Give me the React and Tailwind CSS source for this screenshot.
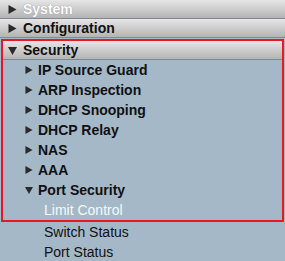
const font = { fontFamily: '"Liberation Sans", Arial, sans-serif' };

function Arrow({ open, small }) {
  const s = small ? 8 : 9;
  return (
    <svg width={s} height={s} viewBox="0 0 9 9" className="shrink-0">
      {open ? (
        <polygon points="0,1 9,1 4.5,9" fill="#2a2a2a" />
      ) : (
        <polygon points="0.5,0 8.5,4.5 0.5,9" fill="#2a2a2a" />
      )}
    </svg>
  );
}

function Header({ label, open, light, pad = 'pl-[8px]' }) {
  return (
    <div className={"h-[19px] border-b border-[#7e8b97] bg-gradient-to-b from-[#e6e6e6] to-[#b4b4b4] flex items-center " + pad}>
      <Arrow open={open} />
      <span
        className={"ml-[6px] text-[14px] leading-[18px] font-bold " + (light ? 'text-white' : 'text-[#111]')}
        style={light ? { textShadow: '0 0 1px #777' } : undefined}
      >
        {label}
      </span>
    </div>
  );
}

function Item({ label, open }) {
  return (
    <div className="h-[20px] flex items-center pl-[22px]">
      <Arrow open={open} small />
      <span className="ml-[5px] text-[14px] leading-[20px] font-bold text-[#111]">{label}</span>
    </div>
  );
}

function Leaf({ label, active, inside }) {
  return (
    <div
      className={
        "h-[20px] text-[14px] leading-[20px] " +
        (inside ? 'pl-[41px] ' : 'pl-[44px] ') +
        (active ? 'text-[#f6f8fa]' : 'text-[#111]')
      }
    >
      {label}
    </div>
  );
}

export default function App() {
  const items = ['IP Source Guard', 'ARP Inspection', 'DHCP Snooping', 'DHCP Relay', 'NAS', 'AAA'];
  return (
    <div className="w-[285px] h-[261px] overflow-hidden bg-[#a4b8c8]" style={font}>
      <Header label="System" light />
      <div className="pb-px">
        <Header label="Configuration" />
      </div>
      <div className="mx-px border-2 border-[#ec1820]">
        <Header label="Security" open pad="pl-[5px]" />
        {items.map(it => (
          <Item key={it} label={it} />
        ))}
        <Item label="Port Security" open />
        <Leaf label="Limit Control" active inside />
      </div>
      <Leaf label="Switch Status" />
      <Leaf label="Port Status" />
    </div>
  );
}
